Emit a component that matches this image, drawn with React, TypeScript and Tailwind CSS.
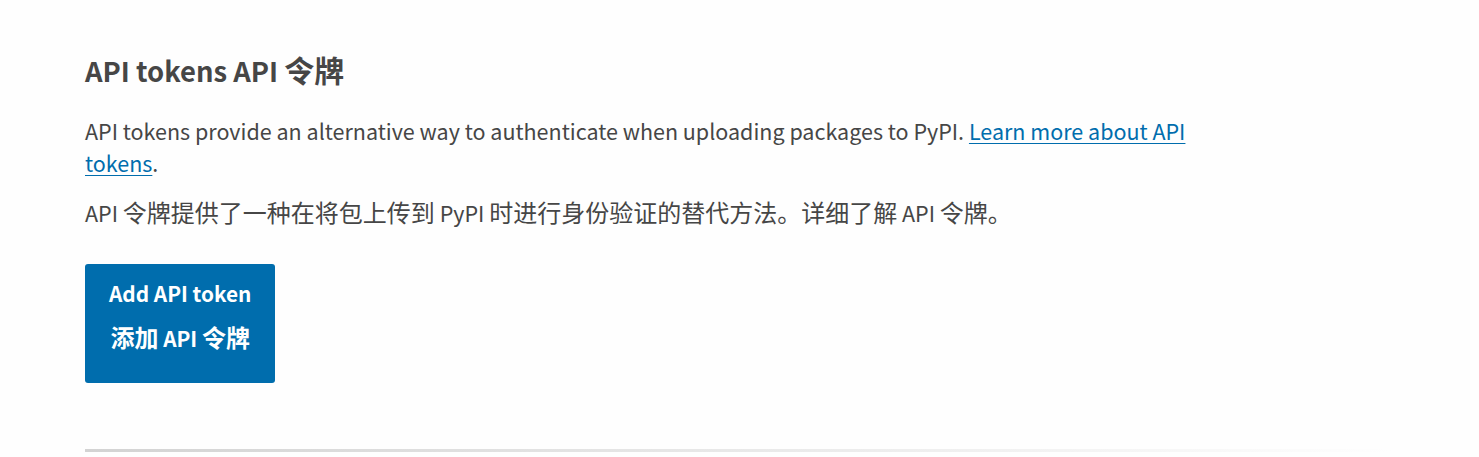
import React from "react";

export default function App() {
  return (
    <div
      className="min-h-[457px] w-full bg-[#fefefe] text-[#464646] overflow-hidden"
      style={{ fontFamily: '"Noto Sans CJK SC", "Noto Sans", sans-serif' }}
    >
      <div className="pl-[85px] pt-[47px]">
        <h2 className="text-[27.4px] font-semibold leading-[44px] text-[#464646]">
          API tokens API <span className="text-[30px]">令牌</span>
        </h2>
        <p className="mt-[23px] max-w-[1130px] text-[21.5px] leading-[32px]">
          API tokens provide an alternative way to authenticate when uploading packages to PyPI.{" "}
          <a href="#" className="text-[#006dad] underline decoration-1 underline-offset-[3px]">
            Learn more about API tokens
          </a>
          .
        </p>
        <p className="mt-[17px] text-[21.5px] leading-[32px]">
          API <span className="text-[24px]">令牌提供了一种在将包上传到</span> PyPI{" "}
          <span className="text-[24px]">时进行身份验证的替代方法。详细了解</span> API{" "}
          <span className="text-[24px]">令牌。</span>
        </p>
        <div className="mt-[35px]">
          <button className="flex flex-col items-center rounded-[3px] bg-[#006dad] px-[24px] pt-[7px] pb-[23px] text-[20.8px] font-bold leading-[44px] text-white">
            <span>Add API token</span>
            <span>
              <span className="text-[24px]">添加</span> API <span className="text-[24px]">令牌</span>
            </span>
          </button>
        </div>
        <div className="mt-[66px] h-[3px] w-[1309px] bg-gradient-to-r from-[#d3d3d3] to-transparent" />
      </div>
    </div>
  );
}
